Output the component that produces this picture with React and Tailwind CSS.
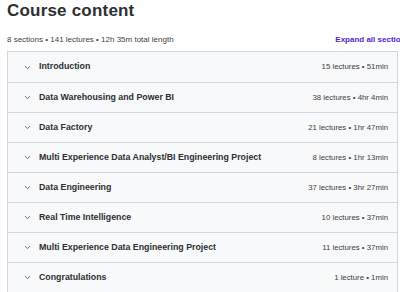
import React from "react";

const sections = [
  { title: "Introduction", meta: "15 lectures • 51min" },
  { title: "Data Warehousing and Power BI", meta: "38 lectures • 4hr 4min" },
  { title: "Data Factory", meta: "21 lectures • 1hr 47min" },
  { title: "Multi Experience Data Analyst/BI Engineering Project", meta: "8 lectures • 1hr 13min" },
  { title: "Data Engineering", meta: "37 lectures • 3hr 27min" },
  { title: "Real Time Intelligence", meta: "10 lectures • 37min" },
  { title: "Multi Experience Data Engineering Project", meta: "11 lectures • 37min" },
  { title: "Congratulations", meta: "1 lecture • 1min" },
];

const Chevron = () => (
  <svg width="7" height="5" viewBox="0 0 7 5" fill="none" className="shrink-0">
    <path d="M1 1.2 L3.5 3.6 L6 1.2" stroke="#6a6f73" strokeWidth="1" />
  </svg>
);

const App = () => {
  return (
    <div
      className="w-[400px] h-[292px] overflow-hidden bg-white text-[#2d2f31]"
      style={{ fontFamily: '"Liberation Sans", Arial, sans-serif' }}
    >
      <div className="pl-[7px]">
        <h2 className="pt-[2px] text-[17px] leading-[18px] font-bold tracking-[0.2px]">
          Course content
        </h2>
        <div className="mt-[15px] flex items-center justify-between whitespace-nowrap h-[10px]">
          <span className="text-[8px] text-[#3e4143]">
            8 sections • 141 lectures • 12h 35m total length
          </span>
          <span className="text-[8px] font-bold text-[#5624d0] mr-[-10px]">
            Expand all sections
          </span>
        </div>
        <div className="mt-[6px] mr-[2px] border border-[#d1d7dc]">
          {sections.map((s, i) => (
            <div
              key={s.title}
              className={
                "flex items-center h-[30px] bg-[#f7f9fa] pl-[16px] pr-[9px] " +
                (i > 0 ? "border-t border-[#d1d7dc]" : "")
              }
            >
              <Chevron />
              <span className="ml-[8px] text-[8.8px] font-bold whitespace-nowrap">
                {s.title}
              </span>
              <span className="ml-auto text-[7.8px] text-[#3e4143] whitespace-nowrap">{s.meta}</span>
            </div>
          ))}
        </div>
      </div>
    </div>
  );
};

export default App;
